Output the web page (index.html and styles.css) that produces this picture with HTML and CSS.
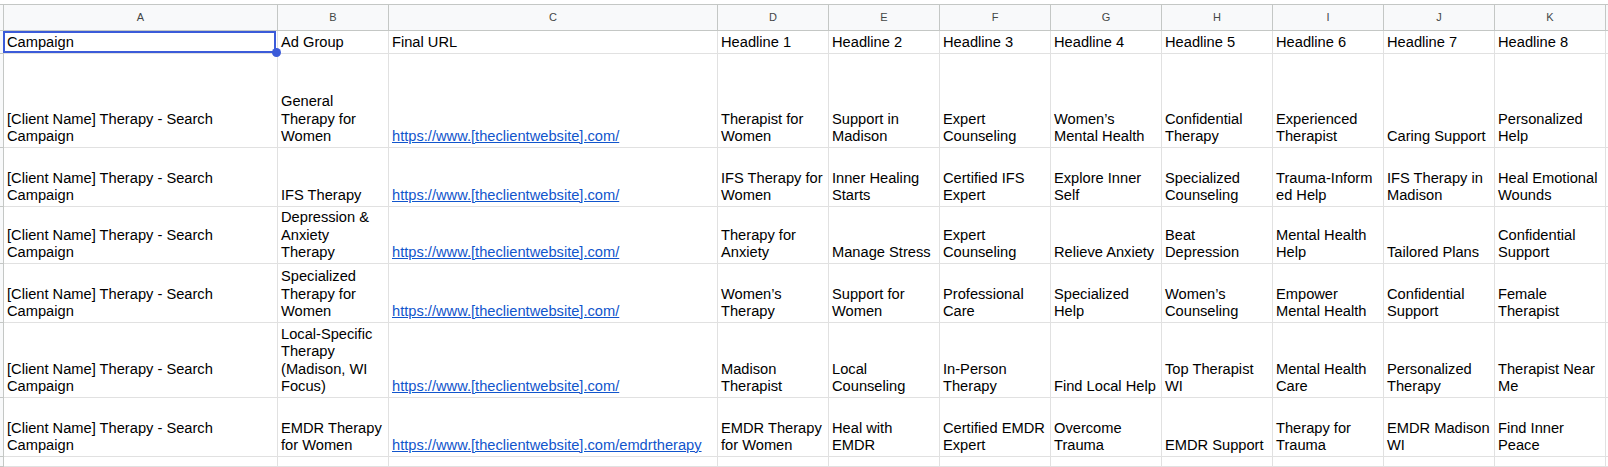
FILE: index.html
```html
<!DOCTYPE html>
<html>
<head>
<meta charset="utf-8">
<title>Sheet</title>
<link rel="stylesheet" href="styles.css">
</head>
<body>
<div class="sheet">
  <div class="hd gut"></div>
  <div class="hd">A</div><div class="hd">B</div><div class="hd">C</div><div class="hd">D</div><div class="hd">E</div><div class="hd">F</div><div class="hd">G</div><div class="hd">H</div><div class="hd">I</div><div class="hd">J</div><div class="hd">K</div><div class="hd"></div>

  <div class="rh"></div>
  <div class="c sel"><span>Campaign</span><i class="handle"></i></div><div class="c"><span>Ad Group</span></div><div class="c"><span>Final URL</span></div><div class="c"><span>Headline 1</span></div><div class="c"><span>Headline 2</span></div><div class="c"><span>Headline 3</span></div><div class="c"><span>Headline 4</span></div><div class="c"><span>Headline 5</span></div><div class="c"><span>Headline 6</span></div><div class="c"><span>Headline 7</span></div><div class="c"><span>Headline 8</span></div><div class="c"></div>

  <div class="rh"></div>
  <div class="c"><span>[Client Name] Therapy - Search Campaign</span></div><div class="c"><span>General Therapy for Women</span></div><div class="c"><a href="#">https://www.[theclientwebsite].com/</a></div><div class="c"><span>Therapist for Women</span></div><div class="c"><span>Support in Madison</span></div><div class="c"><span>Expert Counseling</span></div><div class="c"><span>Women’s Mental Health</span></div><div class="c"><span>Confidential Therapy</span></div><div class="c"><span>Experienced Therapist</span></div><div class="c"><span>Caring Support</span></div><div class="c"><span>Personalized Help</span></div><div class="c"></div>

  <div class="rh"></div>
  <div class="c"><span>[Client Name] Therapy - Search Campaign</span></div><div class="c"><span>IFS Therapy</span></div><div class="c"><a href="#">https://www.[theclientwebsite].com/</a></div><div class="c"><span>IFS Therapy for Women</span></div><div class="c"><span>Inner Healing Starts</span></div><div class="c"><span>Certified IFS Expert</span></div><div class="c"><span>Explore Inner Self</span></div><div class="c"><span>Specialized Counseling</span></div><div class="c"><span>Trauma-Inform<br>ed Help</span></div><div class="c"><span>IFS Therapy in Madison</span></div><div class="c"><span>Heal Emotional Wounds</span></div><div class="c"></div>

  <div class="rh"></div>
  <div class="c"><span>[Client Name] Therapy - Search Campaign</span></div><div class="c"><span>Depression &amp; Anxiety Therapy</span></div><div class="c"><a href="#">https://www.[theclientwebsite].com/</a></div><div class="c"><span>Therapy for Anxiety</span></div><div class="c"><span>Manage Stress</span></div><div class="c"><span>Expert Counseling</span></div><div class="c"><span>Relieve Anxiety</span></div><div class="c"><span>Beat Depression</span></div><div class="c"><span>Mental Health Help</span></div><div class="c"><span>Tailored Plans</span></div><div class="c"><span>Confidential Support</span></div><div class="c"></div>

  <div class="rh"></div>
  <div class="c"><span>[Client Name] Therapy - Search Campaign</span></div><div class="c"><span>Specialized Therapy for Women</span></div><div class="c"><a href="#">https://www.[theclientwebsite].com/</a></div><div class="c"><span>Women’s Therapy</span></div><div class="c"><span>Support for Women</span></div><div class="c"><span>Professional Care</span></div><div class="c"><span>Specialized Help</span></div><div class="c"><span>Women’s Counseling</span></div><div class="c"><span>Empower Mental Health</span></div><div class="c"><span>Confidential Support</span></div><div class="c"><span>Female Therapist</span></div><div class="c"></div>

  <div class="rh"></div>
  <div class="c"><span>[Client Name] Therapy - Search Campaign</span></div><div class="c"><span>Local-Specific Therapy (Madison, WI Focus)</span></div><div class="c"><a href="#">https://www.[theclientwebsite].com/</a></div><div class="c"><span>Madison Therapist</span></div><div class="c"><span>Local Counseling</span></div><div class="c"><span>In-Person Therapy</span></div><div class="c"><span>Find Local Help</span></div><div class="c"><span>Top Therapist WI</span></div><div class="c"><span>Mental Health Care</span></div><div class="c"><span>Personalized Therapy</span></div><div class="c"><span>Therapist Near Me</span></div><div class="c"></div>

  <div class="rh"></div>
  <div class="c"><span>[Client Name] Therapy - Search Campaign</span></div><div class="c"><span>EMDR Therapy for Women</span></div><div class="c"><a href="#">https://www.[theclientwebsite].com/emdrtherapy</a></div><div class="c"><span>EMDR Therapy for Women</span></div><div class="c"><span>Heal with EMDR</span></div><div class="c"><span>Certified EMDR Expert</span></div><div class="c"><span>Overcome Trauma</span></div><div class="c"><span>EMDR Support</span></div><div class="c"><span>Therapy for Trauma</span></div><div class="c"><span>EMDR Madison WI</span></div><div class="c"><span>Find Inner Peace</span></div><div class="c"></div>

  <div class="rh"></div>
  <div class="c"></div><div class="c"></div><div class="c"></div><div class="c"></div><div class="c"></div><div class="c"></div><div class="c"></div><div class="c"></div><div class="c"></div><div class="c"></div><div class="c"></div><div class="c"></div>
</div>
</body>
</html>
```

FILE: styles.css
```css
html, body {
  margin: 0;
  padding: 0;
  background: #ffffff;
  overflow: hidden;
}

.sheet {
  display: grid;
  grid-template-columns: 4px 274px 111px 329px repeat(8, 111px) 1fr;
  grid-template-rows: 27px 23px 94px 59px 57px 59px 75px 59px 1fr;
  padding-top: 4px;
  width: 1608px;
  height: 463px;
  overflow: hidden;
  font-family: "Liberation Sans", Arial, sans-serif;
  font-size: 14.67px;
  line-height: 17.25px;
  color: #000000;
}

.hd {
  box-sizing: border-box;
  background: #f8f9fa;
  border-top: 1px solid #c4c7c5;
  border-right: 1px solid #c4c7c5;
  border-bottom: 1px solid #c4c7c5;
  display: flex;
  align-items: center;
  justify-content: center;
  font-size: 11px;
  line-height: 13px;
  color: #444746;
}

.rh {
  box-sizing: border-box;
  background: #f8f9fa;
  border-right: 1px solid #c4c7c5;
  border-bottom: 1px solid #c4c7c5;
}

.c {
  box-sizing: border-box;
  position: relative;
  border-right: 1px solid #e1e1e1;
  border-bottom: 1px solid #e1e1e1;
  padding: 0 3px 2px 3px;
  display: flex;
  align-items: flex-end;
  overflow: visible;
}

.c a {
  color: #1155cc;
  text-decoration: underline;
  white-space: nowrap;
}

.sel::after {
  content: "";
  position: absolute;
  left: -1px;
  right: 1px;
  top: 0;
  bottom: 0;
  border: 2px solid #3b5bd9;
  pointer-events: none;
}

.handle {
  position: absolute;
  right: -4px;
  bottom: -4px;
  width: 9px;
  height: 9px;
  border-radius: 50%;
  background: #3b5bd9;
  z-index: 2;
}
```
